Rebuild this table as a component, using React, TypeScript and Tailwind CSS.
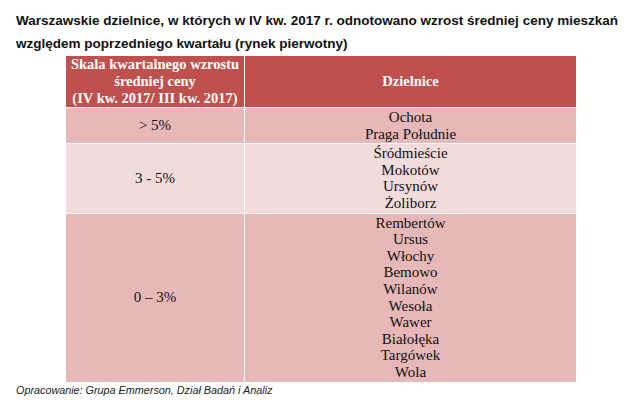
const rows = [
  { range: "> 5%", items: ["Ochota", "Praga Południe"], bg: "bg-[#e6b8b7]" },
  { range: "3 - 5%", items: ["Śródmieście", "Mokotów", "Ursynów", "Żoliborz"], bg: "bg-[#f2dcdb]" },
  {
    range: "0 – 3%",
    items: ["Rembertów", "Ursus", "Włochy", "Bemowo", "Wilanów", "Wesoła", "Wawer", "Białołęka", "Targówek", "Wola"],
    bg: "bg-[#e6b8b7]",
  },
];

export default function App() {
  return (
    <div className="w-[632px] h-[401px] bg-white overflow-hidden">
      <h1 className="pl-[16px] pr-[14px] pt-[9px] text-[13.5px] leading-[23px] font-bold text-[#111] text-justify [text-align-last:left] font-['Liberation_Sans',sans-serif]">
        Warszawskie dzielnice, w których w IV kw. 2017 r. odnotowano wzrost średniej ceny mieszkań względem poprzedniego kwartału (rynek pierwotny)
      </h1>
      <div className="ml-[66px] mt-[1px] w-[510px] font-['Liberation_Serif',serif] text-[#111]">
        <div className="flex h-[52px] bg-[#c0504d] text-white font-bold text-[14.5px] leading-[16.8px] border-b border-white">
          <div className="w-[179px] flex items-center justify-center text-center border-r border-white">
            Skala kwartalnego wzrostu<br />średniej ceny<br />(IV kw. 2017/ III kw. 2017)
          </div>
          <div className="flex-1 flex items-center justify-center">Dzielnice</div>
        </div>
        {rows.map((r, i) => (
          <div key={i} className={`flex ${r.bg} text-[15px] leading-[16.6px] ${i < rows.length - 1 ? "border-b border-white" : ""}`}>
            <div className="w-[179px] flex items-center justify-center border-r border-white">{r.range}</div>
            <div className="flex-1 flex flex-col items-center py-[1px]">
              {r.items.map((it) => (
                <span key={it}>{it}</span>
              ))}
            </div>
          </div>
        ))}
      </div>
      <p className="pl-[16px] pt-[1px] text-[10.8px] leading-[14px] italic text-[#222] font-['Liberation_Sans',sans-serif]">
        Opracowanie: Grupa Emmerson, Dział Badań i Analiz
      </p>
    </div>
  );
}
